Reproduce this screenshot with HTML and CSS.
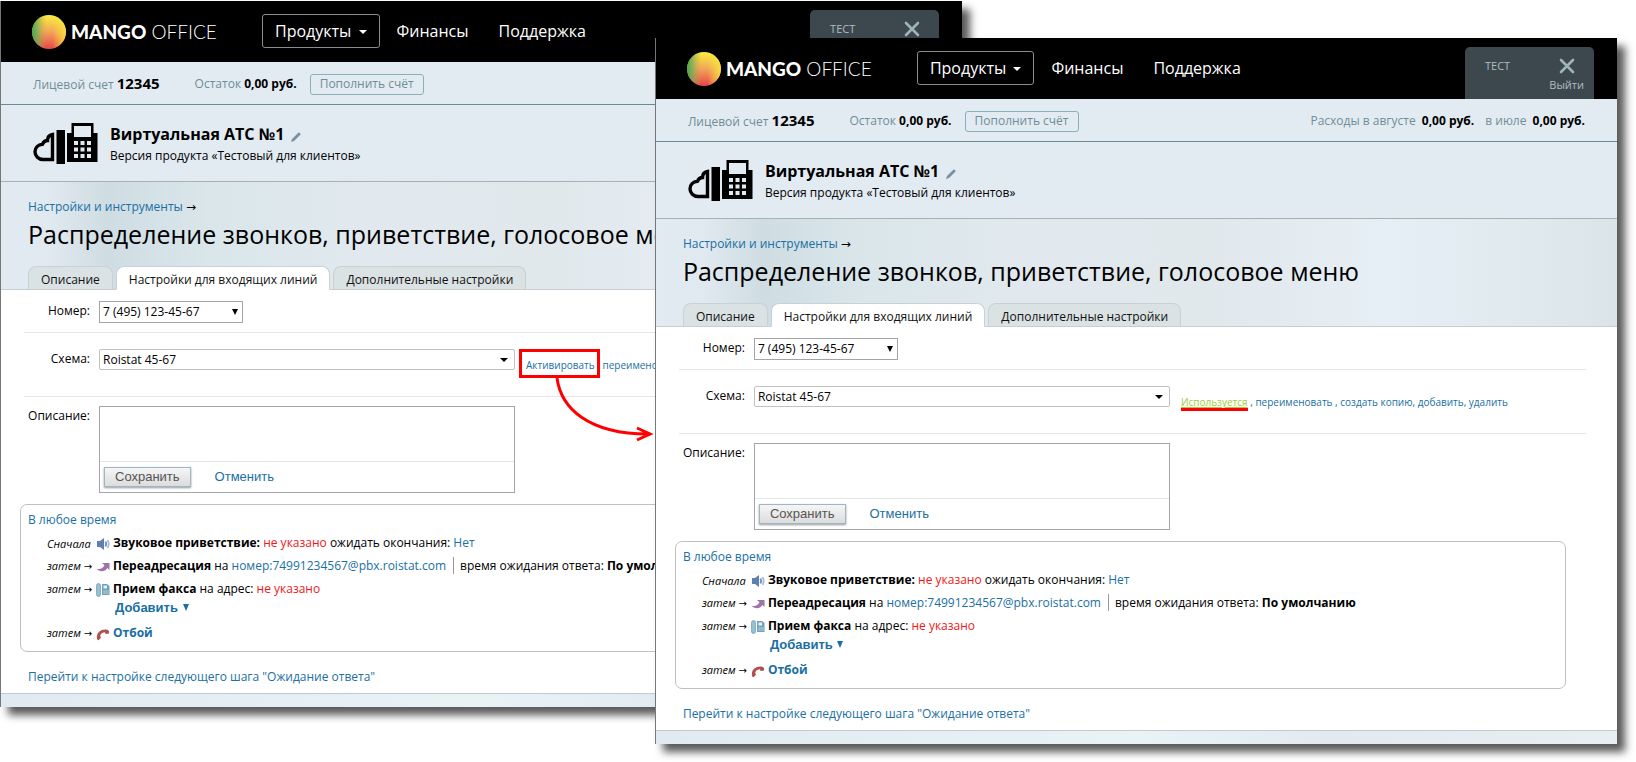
FILE: index.html
```html
<!DOCTYPE html>
<html lang="ru">
<head>
<meta charset="utf-8">
<title>Виртуальная АТС №1</title>
<link rel="stylesheet" href="styles.css">
</head>
<body>
<svg class="defs" aria-hidden="true">
  <defs>
    <linearGradient id="mango-base" x1="0" y1="0" x2="0" y2="1"><stop offset="0" stop-color="#fbee3f"/><stop offset=".5" stop-color="#f2a458"/><stop offset="1" stop-color="#e8434a"/></linearGradient>
    <linearGradient id="mango-left" x1="0" y1="0" x2="1" y2="0"><stop offset="0" stop-color="#3bab50"/><stop offset=".15" stop-color="#6aae52" stop-opacity=".75"/><stop offset=".42" stop-color="#b0ac50" stop-opacity="0"/></linearGradient>
    <linearGradient id="mango-right" x1="0" y1="0" x2="1" y2="0"><stop offset=".6" stop-color="#f9e53c" stop-opacity="0"/><stop offset="1" stop-color="#f9e53c" stop-opacity=".9"/></linearGradient>
    <symbol id="i-mango" viewBox="0 0 34 34"><circle cx="17" cy="17" r="17" fill="url(#mango-base)"/><circle cx="17" cy="17" r="17" fill="url(#mango-right)"/><circle cx="17" cy="17" r="17" fill="url(#mango-left)"/></symbol>
    <symbol id="i-pbx" viewBox="0 0 65 41">
      <path d="M19.500 11.500V36.500H10C5.500 36.500 2 33 2 28.800S5 21.800 9.500 21.300C10.500 18.500 12 17.500 14.500 17.500C14.500 14 16.500 12 19.500 11.500Z" fill="none" stroke="#000" stroke-width="3.400"/>
      <path d="M23.500 7H32V41H23.500Z"/>
      <path d="M34 10H38.500V0H60.500V10H64.500V39H34Z"/>
      <path d="M41 3H58V14H41Z" fill="#e3ebf2"/>
      <path d="M41 18h4v4h-4zm6.500 0h4v4h-4zm6.500 0h4v4h-4zM41 24.500h4v4h-4zm6.500 0h4v4h-4zm6.500 0h4v4h-4zM41 31h4v4h-4zm6.500 0h4v4h-4zm6.500 0h4v4h-4z" fill="#e3ebf2"/>
    </symbol>
    <symbol id="i-pencil" viewBox="0 0 10 10"><path d="M0 10L1 7L7.300.700Q8 0 9 1Q10 2 9.300 2.700L3 9Z" fill="#7493a0"/></symbol>
    <symbol id="i-close" viewBox="0 0 16 16"><path d="M2 2L14 14M14 2L2 14" stroke="#9fb3bb" stroke-width="2.600" stroke-linecap="round"/></symbol>
    <symbol id="i-sound" viewBox="0 0 14 14"><path d="M1 4H4L8 1V13L4 10H1Z" fill="#5d80b0"/><path d="M9.500 4.500Q11 7 9.500 9.500" fill="none" stroke="#7292c0" stroke-width="2"/><path d="M11.500 3Q14 7 11.500 11" fill="none" stroke="#a4b8d6" stroke-width="1.600"/></symbol>
    <symbol id="i-forward" viewBox="0 0 14 14"><path d="M6 3H13.500V10L11.300 8C9 12 3.500 12.500.500 8.500C3.500 10 7 8.500 8.500 5.300Z" fill="#a073a8"/></symbol>
    <symbol id="i-fax" viewBox="0 0 14 14"><rect x=".700" y=".700" width="3.600" height="12.600" rx="1.500" fill="#9fc3d3" stroke="#6fa3ba"/><path d="M6 1H11L13.500 3V12H6Z" fill="#6fa3ba"/><path d="M7.500 2.500H11V5.500H7.500ZM7.500 7.500h1.200v1h-1.200zm2 0h1.200v1h-1.200zm2 0h1v1h-1zM7.500 9.500h1.200v1h-1.200zm2 0h1.200v1h-1.200zm2 0h1v1h-1z" fill="#e6f1f6"/></symbol>
    <symbol id="i-hangup" viewBox="0 0 14 14"><path d="M1 11.500C0 5.500 5 2 10 2.500C13 3 13.500 4.500 13 6.500L9.500 7C9.300 6 9.200 5.600 8.500 5.300C6 5.500 4.300 7 4.200 9.200C5 9.800 5 10 4.800 11L2.500 13.300C1.500 13 1.200 12.500 1 11.500Z" fill="#b0504f"/></symbol>
  </defs>
</svg>

<div class="stage">
  <section class="window window-back">
    <header class="top">
      <div class="logo"><svg class="logo-mark"><use href="#i-mango"/></svg><span class="logo-text"><b>MANGO</b> OFFICE</span></div>
      <nav class="nav"><button class="nav-btn" type="button">Продукты <i class="caret"></i></button><a href="#">Финансы</a><a href="#">Поддержка</a></nav>
      <div class="user"><span class="user-name">ТЕСТ</span><a class="logout" href="#"><svg class="close-icon"><use href="#i-close"/></svg>Выйти</a></div>
    </header>
    <div class="account">
      <span>Лицевой счет <b class="acc-no">12345</b></span>
      <span class="balance">Остаток <b>0,00 руб.</b></span>
      <button class="topup" type="button">Пополнить счёт</button>
      <span class="spend"><span>Расходы в августе <b>0,00 руб.</b></span><span>в июле <b>0,00 руб.</b></span></span>
    </div>
    <div class="product">
      <svg class="pbx"><use href="#i-pbx"/></svg>
      <div><h2>Виртуальная АТС №1 <svg class="pencil"><use href="#i-pencil"/></svg></h2><p>Версия продукта «Тестовый для клиентов»</p></div>
    </div>
    <div class="hero">
      <div class="crumbs"><a href="#">Настройки и инструменты</a> <span class="arrow">→</span></div>
      <h1>Распределение звонков, приветствие, голосовое меню</h1>
      <div class="tabs"><a href="#">Описание</a><a class="active" href="#">Настройки для входящих линий</a><a href="#">Дополнительные настройки</a></div>
    </div>
    <main class="content">
      <div class="row row-number"><label for="num1">Номер:</label><span class="select select-num"><select id="num1"><option>7 (495) 123-45-67</option></select></span></div>
      <div class="row row-scheme"><label for="sch1">Схема:</label><span class="select select-scheme"><select id="sch1"><option>Roistat 45-67</option></select></span>
        <div class="actions"><a class="activate" href="#">Активировать<span class="frame"></span><svg class="pointer" viewBox="0 0 104 70"><path d="M5 0C9 30 36 56 96 56M85 50L98 56L85 62" fill="none" stroke="#f00" stroke-width="3"/></svg></a> , <a href="#">переименовать</a> , <a href="#">создать копию</a>, <a href="#">добавить</a>, <a href="#">удалить</a></div></div>
      <div class="row row-desc"><label for="desc1">Описание:</label><div class="editor"><textarea id="desc1"></textarea><div class="editor-bar"><button type="button">Сохранить</button><a href="#">Отменить</a></div></div></div>
      <div class="plan">
        <a href="#">В любое время</a>
        <div class="steps">
          <div class="step"><em>Сначала</em><svg><use href="#i-sound"/></svg><span><b>Звуковое приветствие:</b> <span class="red">не указано</span> ожидать окончания: <a href="#">Нет</a></span></div>
          <div class="step"><em>затем <span class="arrow">→</span></em><svg><use href="#i-forward"/></svg><span><b>Переадресация</b> на <a href="#">номер:74991234567@pbx.roistat.com</a><span class="wait">время ожидания ответа: <b>По умолчанию</b></span></span></div>
          <div class="step"><em>затем <span class="arrow">→</span></em><svg><use href="#i-fax"/></svg><span><b>Прием факса</b> на адрес: <span class="red">не указано</span></span></div>
          <button class="add" type="button">Добавить <i class="caret"></i></button>
          <div class="step"><em>затем <span class="arrow">→</span></em><svg><use href="#i-hangup"/></svg><a href="#"><b>Отбой</b></a></div>
        </div>
      </div>
      <a class="next" href="#">Перейти к настройке следующего шага "Ожидание ответа"</a>
    </main>
    <footer class="strip"></footer>
  </section>

  <section class="window window-front">
    <header class="top">
      <div class="logo"><svg class="logo-mark"><use href="#i-mango"/></svg><span class="logo-text"><b>MANGO</b> OFFICE</span></div>
      <nav class="nav"><button class="nav-btn" type="button">Продукты <i class="caret"></i></button><a href="#">Финансы</a><a href="#">Поддержка</a></nav>
      <div class="user"><span class="user-name">ТЕСТ</span><a class="logout" href="#"><svg class="close-icon"><use href="#i-close"/></svg>Выйти</a></div>
    </header>
    <div class="account">
      <span>Лицевой счет <b class="acc-no">12345</b></span>
      <span class="balance">Остаток <b>0,00 руб.</b></span>
      <button class="topup" type="button">Пополнить счёт</button>
      <span class="spend"><span>Расходы в августе <b>0,00 руб.</b></span><span>в июле <b>0,00 руб.</b></span></span>
    </div>
    <div class="product">
      <svg class="pbx"><use href="#i-pbx"/></svg>
      <div><h2>Виртуальная АТС №1 <svg class="pencil"><use href="#i-pencil"/></svg></h2><p>Версия продукта «Тестовый для клиентов»</p></div>
    </div>
    <div class="hero">
      <div class="crumbs"><a href="#">Настройки и инструменты</a> <span class="arrow">→</span></div>
      <h1>Распределение звонков, приветствие, голосовое меню</h1>
      <div class="tabs"><a href="#">Описание</a><a class="active" href="#">Настройки для входящих линий</a><a href="#">Дополнительные настройки</a></div>
    </div>
    <main class="content">
      <div class="row row-number"><label for="num2">Номер:</label><span class="select select-num"><select id="num2"><option>7 (495) 123-45-67</option></select></span></div>
      <div class="row row-scheme"><label for="sch2">Схема:</label><span class="select select-scheme"><select id="sch2"><option>Roistat 45-67</option></select></span>
        <div class="actions"><a class="used" href="#">Используется</a> , <a href="#">переименовать</a> , <a href="#">создать копию</a>, <a href="#">добавить</a>, <a href="#">удалить</a></div></div>
      <div class="row row-desc"><label for="desc2">Описание:</label><div class="editor"><textarea id="desc2"></textarea><div class="editor-bar"><button type="button">Сохранить</button><a href="#">Отменить</a></div></div></div>
      <div class="plan">
        <a href="#">В любое время</a>
        <div class="steps">
          <div class="step"><em>Сначала</em><svg><use href="#i-sound"/></svg><span><b>Звуковое приветствие:</b> <span class="red">не указано</span> ожидать окончания: <a href="#">Нет</a></span></div>
          <div class="step"><em>затем <span class="arrow">→</span></em><svg><use href="#i-forward"/></svg><span><b>Переадресация</b> на <a href="#">номер:74991234567@pbx.roistat.com</a><span class="wait">время ожидания ответа: <b>По умолчанию</b></span></span></div>
          <div class="step"><em>затем <span class="arrow">→</span></em><svg><use href="#i-fax"/></svg><span><b>Прием факса</b> на адрес: <span class="red">не указано</span></span></div>
          <button class="add" type="button">Добавить <i class="caret"></i></button>
          <div class="step"><em>затем <span class="arrow">→</span></em><svg><use href="#i-hangup"/></svg><a href="#"><b>Отбой</b></a></div>
        </div>
      </div>
      <a class="next" href="#">Перейти к настройке следующего шага "Ожидание ответа"</a>
    </main>
    <footer class="strip"></footer>
  </section>
</div>
</body>
</html>
```

FILE: styles.css
```css
* { box-sizing: border-box; }
body {
  margin: 0;
  background: #fff;
  color: #000;
  font: 12px/16px "Open Sans", "Noto Sans", sans-serif;
  white-space: nowrap;
}
a { color: #1a6fa3; text-decoration: none; }
h1, h2, p { margin: 0; font-weight: 400; }
button, select, textarea { font: inherit; color: inherit; margin: 0; }
.defs { position: absolute; width: 0; height: 0; }

.stage { display: grid; padding: 1px 19px 19px 0; }
.window {
  grid-area: 1 / 1;
  align-self: start;
  width: 59.5%;
  border-left: 1px solid #777;
  background: #fff;
  box-shadow: 8px 8px 8px rgba(0, 0, 0, .65);
}
.window-front { justify-self: end; margin-top: 37px; z-index: 1; }

.top { display: flex; align-items: flex-start; height: 61px; padding-right: 23px; background: #000; color: #fff; }
.logo { display: flex; align-items: center; width: 261px; height: 61px; padding-left: 31px; gap: 5px; }
.logo-mark { width: 34px; height: 34px; }
.logo-text { font: 300 19px/24px Lato, sans-serif; }
.logo-text b { font-weight: 900; }
.nav { display: flex; align-items: center; padding-top: 13px; font-size: 16px; line-height: 32px; }
.nav a { color: #fff; margin-left: 17px; }
.nav a + a { margin-left: 30px; }
.nav-btn { height: 34px; padding: 0 12px; border: 1px solid #8c8c8c; border-radius: 3px; background: #000; color: #fff; }
.caret { display: inline-block; margin-left: 3px; vertical-align: 3px; border: solid transparent; border-width: 4px 4px 0; border-top-color: currentColor; }
.user { display: flex; justify-content: space-between; width: 129px; height: 52px; margin: 9px 0 0 auto; padding: 11px 10px 0 20px; border-radius: 5px 5px 0 0; background: #3d484e; color: #aebdc3; font-size: 11px; }
.logout { display: flex; flex-direction: column; align-items: center; color: #aebdc3; gap: 3px; }
.close-icon { width: 16px; height: 16px; }

.account { display: flex; align-items: center; height: 43px; padding: 2px 32px 0; border-bottom: 1px solid #6b8a96; background: #e3ebf2; color: #6f8d97; }
.account b { color: #000; }
.acc-no { font-size: 15px; }
.balance { margin-left: 35px; }
.topup { height: 21px; margin-left: 13px; padding: 0 9px; border: 1px solid #8bb0b9; border-radius: 3px; background: none; line-height: 18px; }
.spend { display: flex; gap: 11px; margin-left: auto; }
.spend b { margin-left: 3px; }

.product { display: flex; gap: 12px; height: 77px; padding: 18px 32px 0; border-bottom: 1px solid #a9b0b2; background: #e3ebf2; }
.pbx { width: 65px; height: 41px; }
.product h2 { font-size: 16px; line-height: 22px; font-weight: 700; }
.product p { line-height: 22px; }
.pencil { width: 10px; height: 10px; margin-left: 3px; vertical-align: -2px; }

.hero {
  height: 108px;
  padding: 16px 0 0 27px;
  border-bottom: 1px solid #c8cdd0;
  background: linear-gradient(90deg, #e3ebf2 0, #e0e9ef 5%, #cfdde3 11%, #dae6ea 22%, #e1e9ee 38%, #e0e8ec 58%, #e7eff6 76%, #dbe5e9 100%);
}
.crumbs { line-height: 18px; }
.arrow { font-family: "DejaVu Sans", sans-serif; }
.hero h1 { padding-top: 2px; font-size: 25px; line-height: 32px; }
.tabs { display: flex; gap: 3px; padding-top: 16px; }
.tabs a { height: 24px; padding: 0 12px; border: 1px solid #c8d2d5; border-bottom-color: #c8cdd0; border-radius: 8px 8px 0 0; background: #dae2e3; color: #111; line-height: 25px; }
.tabs .active { background: #fff; border-bottom-color: #fff; }

.content { padding: 0 31px 0 23px; }
.row { display: flex; border-bottom: 1px solid #e4e7ea; }
.row label { width: 66px; margin-right: 9px; text-align: right; }
.row-number { height: 43px; padding-top: 11px; }
.row-scheme { height: 64px; padding-top: 16px; }
.row-desc { padding-top: 9px; border: 0; }
.row label { padding-top: 2px; }
.select { position: relative; display: block; }
.select select { width: 100%; height: 100%; padding: 0 3px; border: 1px solid #a3a5aa; border-radius: 0; background: #fff; appearance: none; }
.select::after { content: ""; position: absolute; right: 7px; top: 9px; border: solid transparent; border-width: 4px 4px 0; border-top-color: #000; }
.select-num { width: 144px; height: 22px; }
.select-num::after { right: 5px; top: 8px; border-width: 6px 3px 0; }
.select-scheme { width: 416px; height: 21px; }
.select-scheme select { border-color: #bfc1c3; border-radius: 2px; }
.actions { padding: 8px 0 0 11px; font-size: 10px; line-height: 16px; color: #1a6fa3; }
.activate { position: relative; }
.used { position: relative; color: #9fce3a; text-decoration: underline; }
.used::after { content: ""; position: absolute; left: 0; right: 0; bottom: -2px; height: 3px; background: #f00; }
.frame { position: absolute; inset: -9px -5px -6px -7px; border: 3px solid #f00; }
.pointer { position: absolute; left: 26px; top: 20px; width: 104px; height: 70px; }

.editor { width: 416px; height: 87px; border: 1px solid #a3a5aa; }
.editor textarea { display: block; width: 100%; height: 54px; padding: 2px; border: 0; outline: 0; resize: none; background: none; }
.editor-bar { display: flex; align-items: center; gap: 24px; padding: 5px 4px 0; border-top: 1px solid #e0e6ea; font: 13px/18px "Liberation Sans", sans-serif; }
.editor-bar button { height: 20px; padding: 0 10px; border: 1px solid #9bb8c6; background: linear-gradient(#f6f6f6, #dcdcdc); box-shadow: 0 1px 2px #999; color: #555; }

.plan { height: 148px; margin: 11px 20px 0 -4px; padding: 7px; border: 1px solid #c0c0c0; border-radius: 7px; }
.steps { padding-top: 3px; }
.step { display: flex; align-items: center; height: 23px; }
.step em { width: 49px; margin-left: 19px; padding-top: 2px; font-size: 11px; }
.step em .arrow { font-size: 10px; font-style: normal; }
.step svg { width: 14px; height: 14px; margin: 3px 3px 0 0; }
.red { color: #f01818; }
.wait { margin-left: 7px; padding-left: 6px; border-left: 1px solid #999; }
.add { display: block; height: 16px; margin: 0 0 5px 87px; padding: 0; border: 0; background: none; color: #1a6fa3; font: 700 13px/16px "Liberation Sans", sans-serif; }
.add .caret { margin-left: 1px; vertical-align: 1px; border-width: 7px 3px 0; }
.next { display: block; padding: 17px 4px 8px; }
.strip { height: 14px; border-top: 1px solid #c3cacd; background: linear-gradient(90deg, #e1eaf0, #e9f3f6 50%, #e2eaf0 70%, #e8eff2); }
```
